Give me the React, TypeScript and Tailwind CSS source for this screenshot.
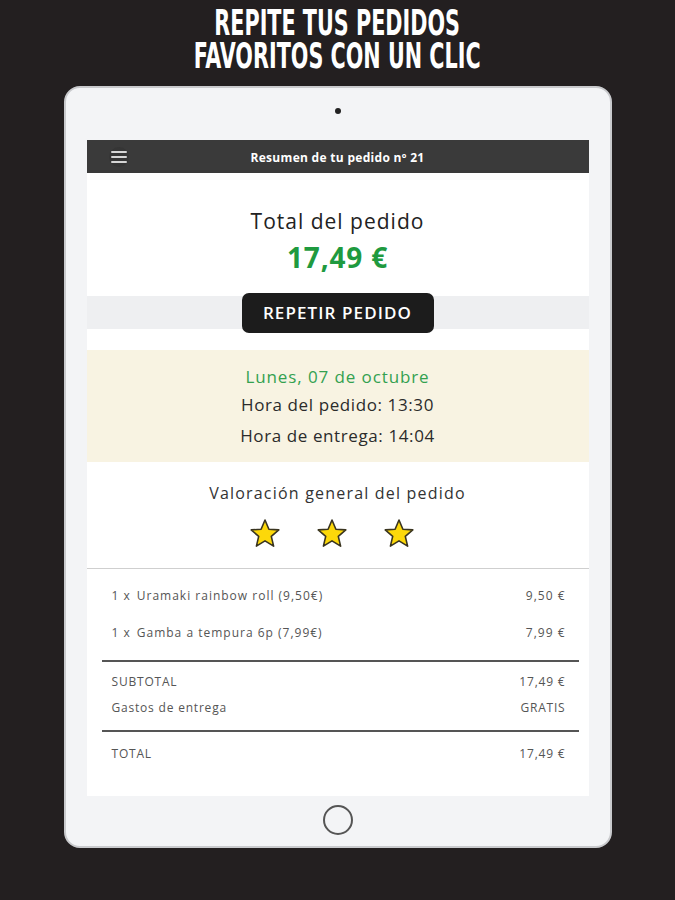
import React from "react"

const items = [
  { qty: "1 x", name: "Uramaki rainbow roll (9,50€)", price: "9,50 €" },
  { qty: "1 x", name: "Gamba a tempura 6p (7,99€)", price: "7,99 €" },
]

function Star() {
  return (
    <svg width="32" height="31" viewBox="0 0 32 31">
      <path
        d="M16 2 L19.9 11.2 L29.8 11.9 L22.3 18.4 L24.6 28.1 L16 22.9 L7.4 28.1 L9.7 18.4 L2.2 11.9 L12.1 11.2 Z"
        fill="#fcd80a"
        stroke="#3a3520"
        strokeWidth="1.6"
        strokeLinejoin="round"
      />
    </svg>
  )
}

function MenuIcon() {
  return (
    <div className="flex h-[20px] w-[20px] flex-col items-center justify-center gap-[3px] rounded-full bg-[#353535]">
      <span className="block h-[2px] w-[16px] rounded-full bg-[#d6d6d6]" />
      <span className="block h-[2px] w-[16px] rounded-full bg-[#d6d6d6]" />
      <span className="block h-[2px] w-[16px] rounded-full bg-[#d6d6d6]" />
    </div>
  )
}

export default function App() {
  return (
    <div className="flex h-[900px] w-[675px] flex-col items-center overflow-hidden bg-[#231f20] font-['Open_Sans',sans-serif]">
      {/* promo heading */}
      <div className="mt-[6px] h-[66px] scale-x-[0.64] text-center font-['DejaVu_Sans_Condensed','DejaVu_Sans',sans-serif] text-[36px] leading-[33px] font-bold whitespace-nowrap text-white">
        REPITE TUS PEDIDOS
        <br />
        FAVORITOS CON UN CLIC
      </div>

      {/* tablet */}
      <div className="mt-[14px] flex h-[762px] w-[548px] flex-col items-center rounded-[16px] border-2 border-[#c9cacd] bg-[#f3f4f6]">
        <div className="mt-[20px] h-[6px] w-[6px] rounded-full bg-[#222]" />

        {/* screen */}
        <div className="mt-[26px] flex h-[656px] w-[502px] flex-col bg-white">
          <div className="relative flex h-[33px] items-center justify-center bg-[#3a3a3a]">
            <div className="absolute left-[22px] top-[7px]">
              <MenuIcon />
            </div>
            <span className="pt-[3px] text-[12px] font-bold tracking-[0.3px] text-white">Resumen de tu pedido nº 21</span>
          </div>

          <div className="flex h-[123px] flex-col items-center pt-[34px]">
            <span className="text-[21px] leading-[28px] tracking-[1px] text-[#222]">Total del pedido</span>
            <span className="mt-[6px] text-[28px] leading-[32px] font-bold tracking-[0.8px] text-[#1f9a3f]">17,49 €</span>
          </div>

          <div className="flex h-[33px] items-center justify-center bg-[#eeeff1]">
            <button className="flex h-[40px] w-[192px] shrink-0 items-center justify-center rounded-[7px] bg-[#1c1c1c] text-[17px] font-semibold tracking-[1.1px] text-white">
              REPETIR PEDIDO
            </button>
          </div>

          <div className="mt-[21px] flex h-[112px] flex-col items-center bg-[#f8f3e2] pt-[16px]">
            <span className="text-[17px] leading-[22px] tracking-[0.9px] text-[#33a150]">Lunes, 07 de octubre</span>
            <span className="mt-[6px] text-[17px] leading-[22px] tracking-[0.6px] text-[#2b2b2b]">Hora del pedido: 13:30</span>
            <span className="mt-[9px] text-[17px] leading-[22px] tracking-[0.6px] text-[#2b2b2b]">Hora de entrega: 14:04</span>
          </div>

          <div className="flex h-[107px] flex-col items-center border-b border-[#cfcfcf] pt-[20px]">
            <span className="text-[16px] leading-[22px] tracking-[1.2px] text-[#333]">Valoración general del pedido</span>
            <div className="mt-[14px] mr-[12px] flex gap-[35px]">
              <Star />
              <Star />
              <Star />
            </div>
          </div>

          <div className="flex flex-col pt-[18px] pl-[25px] pr-[23px] text-[12px] leading-[18px] tracking-[1px] text-[#555]">
            {items.map((item, i) => (
              <div key={item.name} className={i === 0 ? "mb-[19px] flex justify-between" : "mb-[18px] flex justify-between"}>
                <span>
                  {item.qty}
                  <span className="ml-[6px]">{item.name}</span>
                </span>
                <span>{item.price}</span>
              </div>
            ))}
          </div>

          <div className="ml-[15px] mr-[10px] border-t-2 border-[#555]" />

          <div className="flex flex-col gap-[8px] pt-[11px] pb-[13px] pl-[25px] pr-[23px] text-[12px] leading-[18px] tracking-[0.8px] text-[#555]">
            <div className="flex justify-between">
              <span>SUBTOTAL</span>
              <span>17,49 €</span>
            </div>
            <div className="flex justify-between">
              <span>Gastos de entrega</span>
              <span>GRATIS</span>
            </div>
          </div>

          <div className="ml-[15px] mr-[10px] border-t-2 border-[#555]" />

          <div className="flex justify-between pt-[13px] pl-[25px] pr-[23px] text-[12px] leading-[18px] tracking-[0.8px] text-[#555]">
            <span>TOTAL</span>
            <span>17,49 €</span>
          </div>
        </div>

        {/* home button */}
        <div className="mt-[9px] h-[30px] w-[30px] rounded-full border-2 border-[#555]" />
      </div>
    </div>
  )
}
